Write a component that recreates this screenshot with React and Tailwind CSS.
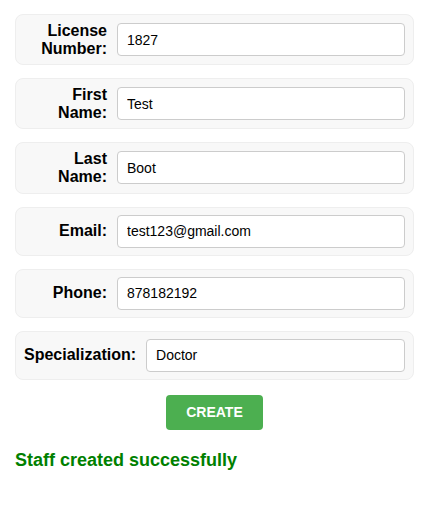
import React, { useState } from "react";

const FIELDS = [
  { id: "license", label: "License Number:", value: "1827" },
  { id: "first", label: "First Name:", value: "Test" },
  { id: "last", label: "Last Name:", value: "Boot" },
  { id: "email", label: "Email:", value: "test123@gmail.com" },
  { id: "phone", label: "Phone:", value: "878182192" },
  { id: "spec", label: "Specialization:", value: "Doctor" },
];

const App = () => {
  const [values, setValues] = useState(
    Object.fromEntries(FIELDS.map((f) => [f.id, f.value]))
  );

  return (
    <div className="bg-white min-h-screen px-[15px] pt-[14px] font-['Liberation_Sans',Arial,sans-serif] text-black">
      <form className="flex flex-col gap-[13px]" onSubmit={(e) => e.preventDefault()}>
        {FIELDS.map((field) => (
          <div
            key={field.id}
            className="flex items-center gap-[10px] bg-[#f8f8f8] border border-[#eeeeee] rounded-[8px] px-[8px] py-[7px]"
          >
            <label
              htmlFor={field.id}
              className="basis-[83px] grow-0 shrink-0 text-right font-bold text-[16px] leading-[17.6px]"
            >
              {field.label}
            </label>
            <input
              id={field.id}
              type="text"
              value={values[field.id]}
              onChange={(e) => setValues({ ...values, [field.id]: e.target.value })}
              className="flex-1 min-w-0 h-[33px] bg-white border border-[#cccccc] rounded-[4px] px-[9px] text-[14px] outline-none"
            />
          </div>
        ))}

        <div className="flex justify-center mt-[2px]">
          <button
            type="submit"
            className="w-[97px] h-[35px] bg-[#4caf50] text-white font-bold text-[14px] rounded-[4px] cursor-pointer"
          >
            CREATE
          </button>
        </div>
      </form>

      <p className="mt-[17px] text-[#008000] font-bold text-[18px]">
        Staff created successfully
      </p>
    </div>
  );
};

export default App;
